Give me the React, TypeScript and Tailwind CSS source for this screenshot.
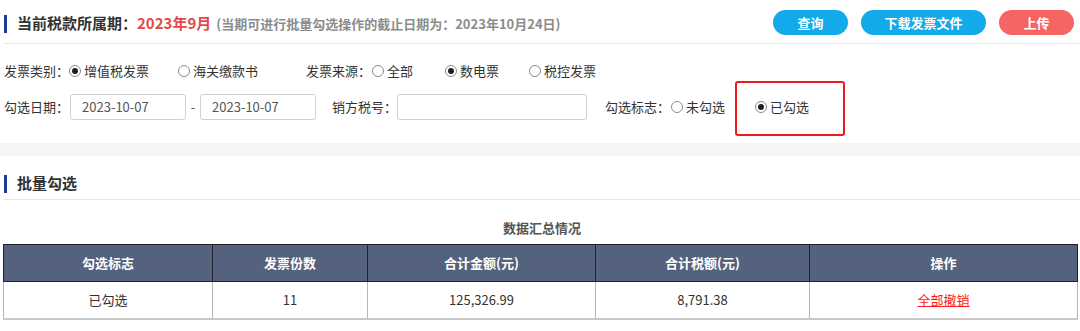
import React from 'react';

const Radio = ({ checked }: { checked?: boolean }) => (
  <span className="w-[12px] h-[12px] rounded-full border border-[#8a8a8a] bg-white flex items-center justify-center shrink-0">
    {checked && <span className="w-[6px] h-[6px] rounded-full bg-[#1f1f1f]" />}
  </span>
);

const Option = ({ label, checked, className = '' }: { label: string; checked?: boolean; className?: string }) => (
  <label className={`flex items-center gap-[3px] ${className}`}>
    <Radio checked={checked} />
    <span>{label}</span>
  </label>
);

const SectionTitle = ({ children }: { children: React.ReactNode }) => (
  <div className="flex items-center">
    <span className="w-[3px] h-[18px] bg-[#1c3a8f]" />
    <span className="ml-[10px] text-[15px] font-bold text-[#333]">{children}</span>
  </div>
);

const cols = [
  { title: '勾选标志', value: '已勾选', w: 'w-[209px]' },
  { title: '发票份数', value: '11', w: 'w-[155px]' },
  { title: '合计金额(元)', value: '125,326.99', w: 'w-[228px]' },
  { title: '合计税额(元)', value: '8,791.38', w: 'w-[214px]' },
  { title: '操作', value: '', w: '' },
];

export default function App() {
  return (
    <div className="w-[1080px] h-[331px] overflow-hidden bg-white text-[13px] text-[#333] font-['Microsoft_YaHei','Noto_Sans_CJK_SC',sans-serif]">
      {/* 顶部 */}
      <div className="pl-[4px]">
        <div className="h-[44px] pt-[4px] flex items-center border-b border-[#e6e6e6] pr-[6px]">
          <span className="w-[3px] h-[18px] bg-[#1c3a8f]" />
          <span className="ml-[10px] text-[15px] font-bold text-[#333]">当前税款所属期：</span>
          <span className="text-[15px] font-bold text-[#e54848]">2023年9月</span>
          <span className="ml-[5px] text-[13px] font-bold text-[#8c8c8c]">(当期可进行批量勾选操作的截止日期为：2023年10月24日)</span>
          <div className="ml-auto flex items-center gap-[13px] -mt-[2px]">
            <button className="w-[75px] h-[25px] rounded-full bg-[#12aaea] text-white text-[13px] font-bold">查询</button>
            <button className="w-[125px] h-[25px] rounded-full bg-[#12aaea] text-white text-[13px] font-bold">下载发票文件</button>
            <button className="w-[75px] h-[25px] rounded-full bg-[#f66464] text-white text-[13px] font-bold">上传</button>
          </div>
        </div>

        <div className="pt-[17px] pb-[23px]">
          <div className="h-[20px] flex items-center">
            <span>发票类别：</span>
            <Option label="增值税发票" checked />
            <Option label="海关缴款书" className="ml-[29px]" />
            <span className="ml-[48px]">发票来源：</span>
            <Option label="全部" className="ml-[1px]" />
            <Option label="数电票" checked className="ml-[32px]" />
            <Option label="税控发票" className="ml-[30px]" />
          </div>
          <div className="mt-[13px] h-[26px] flex items-center">
            <span>勾选日期：</span>
            <div className="ml-[1px] w-[116px] h-[26px] border border-[#d0d0d0] rounded-[3px] pl-[11px] flex items-center text-[#555]">2023-10-07</div>
            <span className="w-[14px] text-center text-[#555]">-</span>
            <div className="w-[116px] h-[26px] border border-[#d0d0d0] rounded-[3px] pl-[11px] flex items-center text-[#555]">2023-10-07</div>
            <span className="ml-[16px]">销方税号：</span>
            <div className="w-[190px] h-[26px] border border-[#d0d0d0] rounded-[3px]" />
            <span className="ml-[18px]">勾选标志：</span>
            <Option label="未勾选" className="ml-[1px]" />
            <div className="relative ml-[30px]">
              <Option label="已勾选" checked />
              <span className="absolute left-[-20px] right-[-36px] top-[-16px] bottom-[-19px] border-2 border-[#f01818] rounded-[3px]" />
            </div>
          </div>
        </div>
      </div>

      <div className="h-[13px] bg-[#f6f6f6]" />

      {/* 批量勾选 */}
      <div className="pl-[4px]">
        <div className="h-[44px] pt-[12px] flex items-center border-b border-[#e6e6e6]">
          <SectionTitle>批量勾选</SectionTitle>
        </div>
        <div className="mt-[18px] mb-[6px] h-[20px] text-center font-bold text-[#555]">数据汇总情况</div>
      </div>

      <div className="pl-[3px] pr-[2px]">
        <table className="w-full table-fixed border-collapse">
          <colgroup>
            {cols.map((c) => (
              <col key={c.title} className={c.w} />
            ))}
          </colgroup>
          <thead>
            <tr className="h-[37px] bg-[#55627e]">
              {cols.map((c) => (
                <th key={c.title} className="border border-[#222] text-white font-bold text-[13px]">
                  {c.title}
                </th>
              ))}
            </tr>
          </thead>
          <tbody>
            <tr className="h-[37px]">
              {cols.map((c, i) => (
                <td key={c.title} className="border border-[#b5b5b5] border-b-2 border-b-[#c8c8c8] text-center text-[13px] text-[#333]">
                  {i === 4 ? <a className="text-[#ff1a1a] underline">全部撤销</a> : c.value}
                </td>
              ))}
            </tr>
          </tbody>
        </table>
      </div>
    </div>
  );
}
